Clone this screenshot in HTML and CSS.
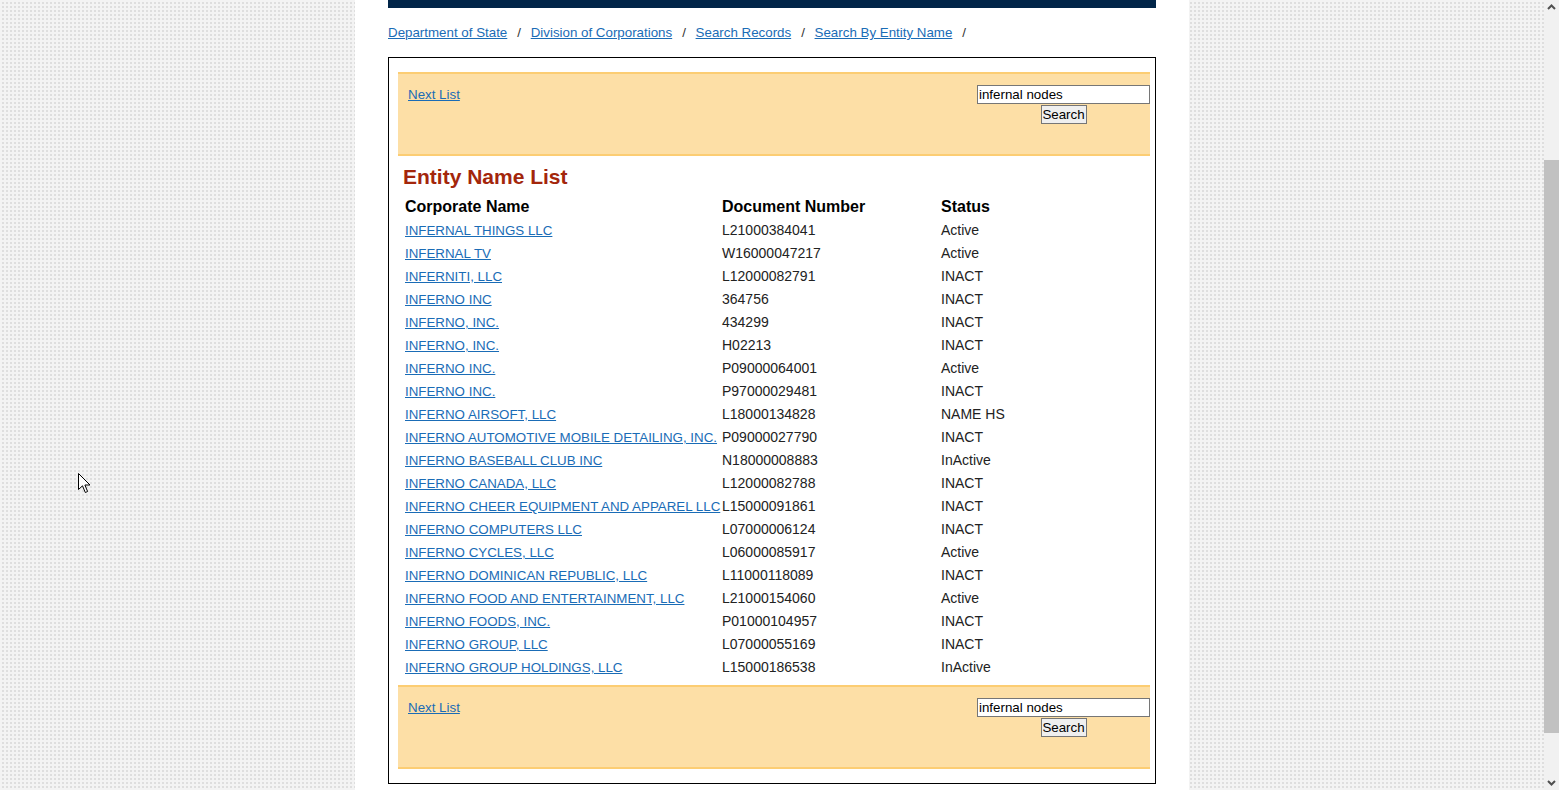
FILE: index.html
```html
<!DOCTYPE html>
<html>
<head>
<meta charset="utf-8">
<title>Entity Name List</title>
<link rel="stylesheet" href="styles.css">
</head>
<body>
<div class="viewport">
  <div class="page">
    <div class="topbar"></div>
    <nav class="crumbs">
      <a href="#">Department of State</a><span class="sep">/</span>
      <a href="#">Division of Corporations</a><span class="sep">/</span>
      <a href="#">Search Records</a><span class="sep">/</span>
      <a href="#">Search By Entity Name</a><span class="sep">/</span>
    </nav>
    <div class="box">
      <div class="panel">
        <a href="#" class="next">Next List</a>
        <form class="search">
          <input type="text" value="infernal nodes">
          <button type="button">Search</button>
        </form>
      </div>
      <h2 class="title">Entity Name List</h2>
      <div class="list">
        <div class="row head"><span>Corporate Name</span><span>Document Number</span><span>Status</span></div>
        <div class="row"><a href="#">INFERNAL THINGS LLC</a><span>L21000384041</span><span>Active</span></div>
        <div class="row"><a href="#">INFERNAL TV</a><span>W16000047217</span><span>Active</span></div>
        <div class="row"><a href="#">INFERNITI, LLC</a><span>L12000082791</span><span>INACT</span></div>
        <div class="row"><a href="#">INFERNO INC</a><span>364756</span><span>INACT</span></div>
        <div class="row"><a href="#">INFERNO, INC.</a><span>434299</span><span>INACT</span></div>
        <div class="row"><a href="#">INFERNO, INC.</a><span>H02213</span><span>INACT</span></div>
        <div class="row"><a href="#">INFERNO INC.</a><span>P09000064001</span><span>Active</span></div>
        <div class="row"><a href="#">INFERNO INC.</a><span>P97000029481</span><span>INACT</span></div>
        <div class="row"><a href="#">INFERNO AIRSOFT, LLC</a><span>L18000134828</span><span>NAME HS</span></div>
        <div class="row"><a href="#">INFERNO AUTOMOTIVE MOBILE DETAILING, INC.</a><span>P09000027790</span><span>INACT</span></div>
        <div class="row"><a href="#">INFERNO BASEBALL CLUB INC</a><span>N18000008883</span><span>InActive</span></div>
        <div class="row"><a href="#">INFERNO CANADA, LLC</a><span>L12000082788</span><span>INACT</span></div>
        <div class="row"><a href="#">INFERNO CHEER EQUIPMENT AND APPAREL LLC</a><span>L15000091861</span><span>INACT</span></div>
        <div class="row"><a href="#">INFERNO COMPUTERS LLC</a><span>L07000006124</span><span>INACT</span></div>
        <div class="row"><a href="#">INFERNO CYCLES, LLC</a><span>L06000085917</span><span>Active</span></div>
        <div class="row"><a href="#">INFERNO DOMINICAN REPUBLIC, LLC</a><span>L11000118089</span><span>INACT</span></div>
        <div class="row"><a href="#">INFERNO FOOD AND ENTERTAINMENT, LLC</a><span>L21000154060</span><span>Active</span></div>
        <div class="row"><a href="#">INFERNO FOODS, INC.</a><span>P01000104957</span><span>INACT</span></div>
        <div class="row"><a href="#">INFERNO GROUP, LLC</a><span>L07000055169</span><span>INACT</span></div>
        <div class="row"><a href="#">INFERNO GROUP HOLDINGS, LLC</a><span>L15000186538</span><span>InActive</span></div>
      </div>
      <div class="panel bottom">
        <a href="#" class="next">Next List</a>
        <form class="search">
          <input type="text" value="infernal nodes">
          <button type="button">Search</button>
        </form>
      </div>
    </div>
  </div>
  <svg class="cursor" width="13" height="21" viewBox="0 0 13 21"><path d="M0.5 0.5 L0.5 16.5 L4.5 12.8 L7.3 19.5 L9.6 18.5 L6.9 12 L12 12 Z" fill="#fff" stroke="#000" stroke-width="1" stroke-linejoin="miter"/></svg>
</div>
<div class="scrollbar">
  <div class="arrow up"><svg width="15" height="15" viewBox="0 0 15 15"><path d="M4 9 L7.5 5.5 L11 9" fill="none" stroke="#505050" stroke-width="2"/></svg></div>
  <div class="track"><div class="thumb"></div></div>
  <div class="arrow down"><svg width="15" height="15" viewBox="0 0 15 15"><path d="M4 6 L7.5 9.5 L11 6" fill="none" stroke="#505050" stroke-width="2"/></svg></div>
</div>
</body>
</html>
```
FILE: styles.css
```css
html, body {
  margin: 0;
  padding: 0;
  height: 790px;
  overflow: hidden;
}
body {
  display: flex;
  font-family: "Liberation Sans", Arial, sans-serif;
  color: #222;
}
.viewport {
  flex: 1;
  position: relative;
  height: 790px;
  background-color: #f3f3f3;
  background-image: radial-gradient(circle, #dedede 0.9px, transparent 1.1px);
  background-size: 4px 4px;
  background-position: 1px 1px;
  display: flex;
  justify-content: center;
}
.page {
  width: 834px;
  box-sizing: border-box;
  padding: 0 33px;
  background: #fff;
  height: 790px;
}
.topbar {
  height: 8px;
  background: #012548;
}
.crumbs {
  height: 49px;
  line-height: 16px;
  padding-top: 17px;
  box-sizing: border-box;
  font-size: 13.33px;
}
.crumbs a {
  color: #1a6cb6;
}
.crumbs .sep {
  color: #333;
  padding: 0 6px 0 10px;
}
a {
  color: #1a6cb6;
  text-decoration: underline;
}
.box {
  border: 1px solid #000;
  padding: 14px 5px 14px 9px;
}
.panel {
  background: #fddfa6;
  border-top: 2px solid #fccd73;
  border-bottom: 2px solid #fccd73;
  display: flex;
  justify-content: space-between;
  align-items: flex-start;
  padding: 11px 0 0 10px;
  box-sizing: content-box;
  height: 69px;
}
.panel .next {
  font-size: 13.33px;
  line-height: 19px;
}
.search {
  margin: 0;
  width: 173px;
  display: flex;
  flex-direction: column;
  align-items: center;
}
.search input {
  width: 173px;
  height: 19px;
  box-sizing: border-box;
  border: 1px solid #767676;
  padding: 0 1px;
  margin: 0;
  font: 13.33px "Liberation Sans", Arial, sans-serif;
  color: #000;
  background: #fff;
}
.search button {
  width: 46px;
  height: 19px;
  box-sizing: border-box;
  margin: 1px 0 0 0;
  padding: 0;
  border: 1px solid #767676;
  background: #efefef;
  font: 13.33px "Liberation Sans", Arial, sans-serif;
  color: #000;
  line-height: 17px;
}
.title {
  margin: 9px 0 6px 5px;
  font-size: 21px;
  line-height: 24px;
  font-weight: bold;
  color: #a3260b;
}
.list {
  padding-left: 7px;
  margin-bottom: 6px;
}
.row {
  display: grid;
  grid-template-columns: 317px 219px 1fr;
  height: 23px;
  line-height: 23px;
  font-size: 14px;
  white-space: nowrap;
}
.row a {
  font-size: 13.33px;
}
.row.head {
  height: 24px;
  line-height: 24px;
  font-size: 16px;
  font-weight: bold;
  color: #000;
}
.cursor {
  position: absolute;
  left: 78px;
  top: 473px;
}
.scrollbar {
  width: 15px;
  height: 790px;
  background: #f1f1f1;
  display: flex;
  flex-direction: column;
}
.arrow {
  height: 15px;
}
.track {
  flex: 1;
  display: flex;
  flex-direction: column;
}
.thumb {
  margin-top: 145px;
  height: 573px;
  background: #c1c1c1;
}
```
